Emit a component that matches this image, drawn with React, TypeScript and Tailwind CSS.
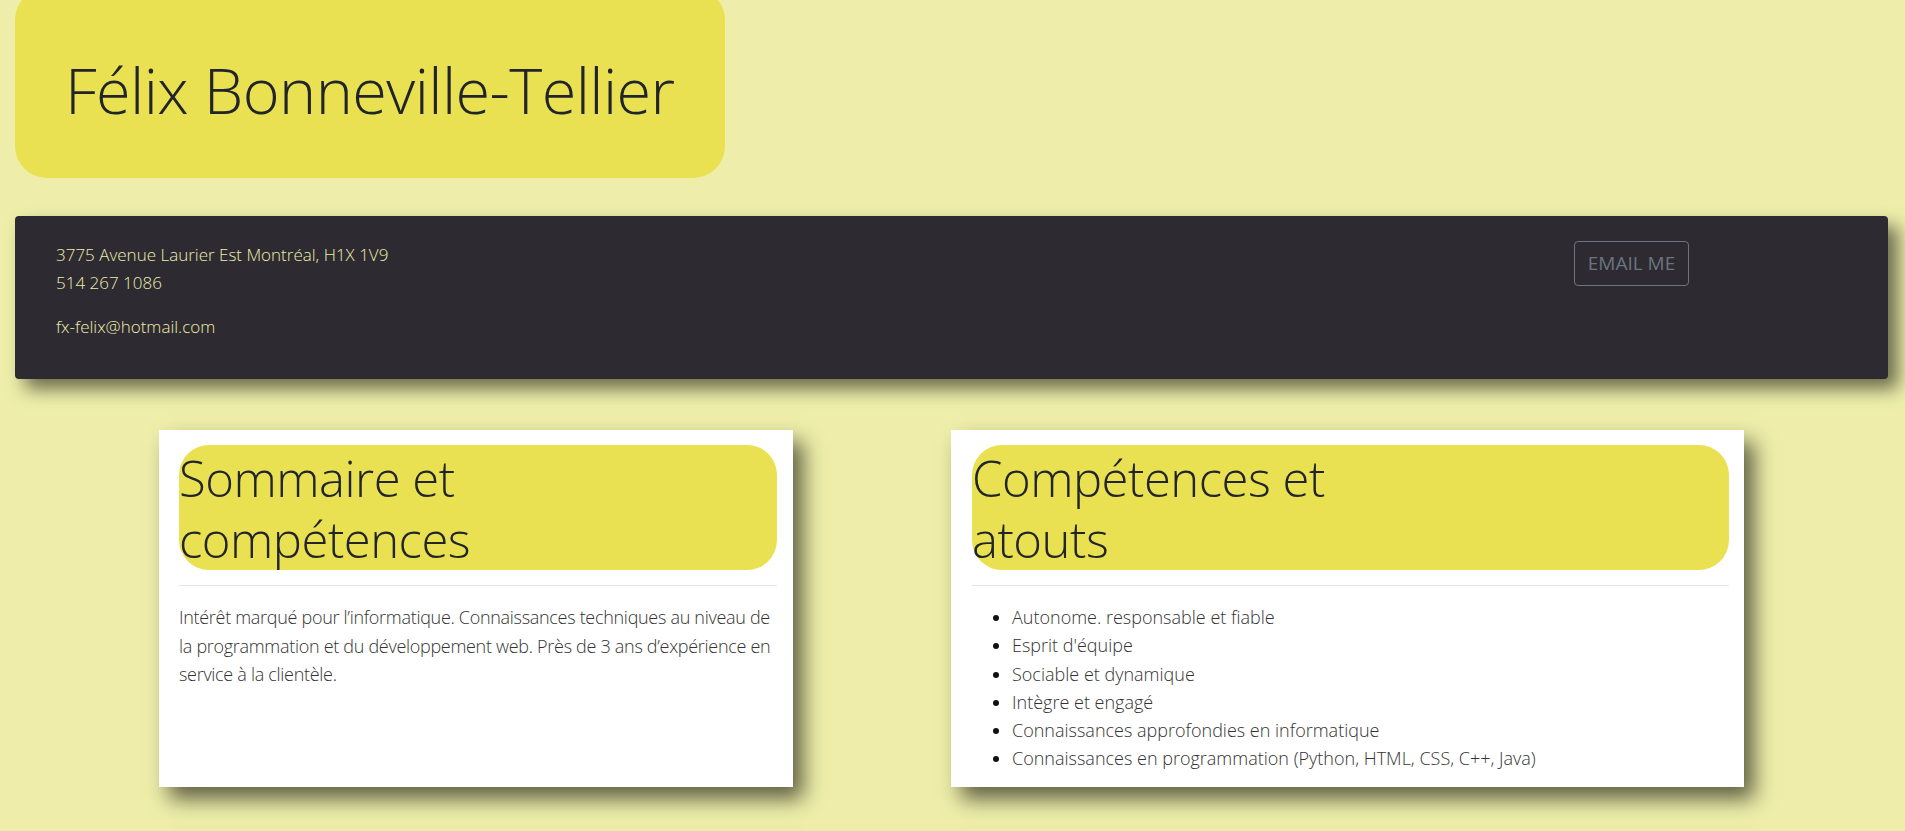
import React from 'react';

const atouts = [
  'Autonome. responsable et fiable',
  "Esprit d'équipe",
  'Sociable et dynamique',
  'Intègre et engagé',
  'Connaissances approfondies en informatique',
  'Connaissances en programmation (Python, HTML, CSS, C++, Java)',
];

const App = () => {
  return (
    <div className="min-h-screen overflow-hidden bg-[#eeeeaa] font-['Open_Sans',sans-serif] font-light text-[#212529]">
      {/* en-tête */}
      <header className="ml-[15px] mt-[-12px] flex h-[190px] w-[710px] items-center rounded-[32px] bg-[#e9e152] pl-[50px] pt-[13px]">
        <h1 className="text-[63px] leading-none font-light tracking-[-0.6px]">Félix Bonneville-Tellier</h1>
      </header>

      {/* coordonnées */}
      <section className="ml-[15px] mr-[17px] mt-[38px] flex h-[163px] rounded-[4px] bg-[#2d2a32] pl-[41px] pt-[25px] shadow-[10px_10px_18px_rgba(0,0,0,0.55)]">
        <div className="flex-1 text-[17px] text-[#eeeeaa]">
          <p className="leading-[28px]">
            3775 Avenue Laurier Est Montréal, H1X 1V9
            <br />
            514 267 1086
          </p>
          <p className="mt-[16px] leading-[28px]">fx-felix@hotmail.com</p>
        </div>
        <div className="pr-[199px]">
          <button className="h-[45px] w-[115px] rounded-[4px] border border-[#6c757d] text-[19px] font-normal text-[#6c757d]">
            EMAIL ME
          </button>
        </div>
      </section>

      {/* cartes */}
      <main className="ml-[159px] mt-[51px] flex gap-[158px]">
        <div className="w-[634px] bg-white pb-[14px] pl-[20px] pr-[16px] pt-[15px] shadow-[10px_12px_20px_rgba(0,0,0,0.6)]">
          <h2 className="rounded-[30px] bg-[#e9e152] pt-[3px] text-[49px] leading-[61px] font-light tracking-[-0.5px]">
            Sommaire et
            <br />
            compétences
          </h2>
          <hr className="mb-[17px] mt-[15px] border-t border-[#e5e5e5]" />
          <p className="text-[18px] leading-[28.5px] tracking-[-0.3px] text-[#333]">
            Intérêt marqué pour l’informatique. Connaissances techniques au niveau de la programmation et du
            développement web. Près de 3 ans d’expérience en service à la clientèle.
          </p>
        </div>

        <div className="w-[793px] bg-white pb-[14px] pl-[21px] pr-[15px] pt-[15px] shadow-[10px_12px_20px_rgba(0,0,0,0.6)]">
          <h2 className="rounded-[30px] bg-[#e9e152] pt-[3px] text-[49px] leading-[61px] font-light tracking-[-0.5px]">
            Compétences et
            <br />
            atouts
          </h2>
          <hr className="mb-[17px] mt-[15px] border-t border-[#e5e5e5]" />
          <ul className="list-disc pl-[40px] text-[18px] leading-[28.3px] text-[#333] marker:text-[#111]">
            {atouts.map((item) => (
              <li key={item}>{item}</li>
            ))}
          </ul>
        </div>
      </main>

      <div className="ml-[164px] mt-[56px] h-[200px] w-[1586px] bg-white shadow-[10px_12px_20px_rgba(0,0,0,0.6)]" />
    </div>
  );
};

export default App;
